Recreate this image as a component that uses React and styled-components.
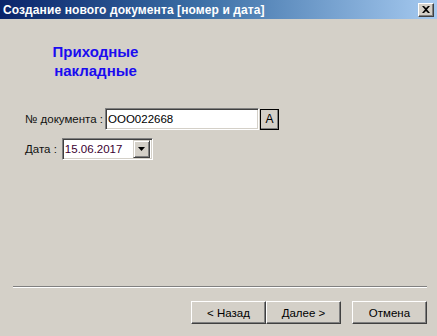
import React from "react";
import styled, { createGlobalStyle } from "styled-components";

const Global = createGlobalStyle`
  html, body {
    margin: 0;
    padding: 0;
    background: #d4d0c8;
  }
  * { box-sizing: border-box; }
`;

const Window = styled.div`
  width: 437px;
  height: 336px;
  display: flex;
  flex-direction: column;
  background: #d4d0c8;
  font-family: "Liberation Sans", Arial, sans-serif;
  font-size: 11px;
  color: #000;
`;

const TitleBar = styled.div`
  height: 19px;
  display: flex;
  align-items: center;
  justify-content: space-between;
  padding: 0 3px 0 3px;
  background: linear-gradient(to right, #0a246a 0%, #3a6ea5 45%, #a6caf0 100%);
`;

const Title = styled.span`
  color: #fff;
  font-weight: bold;
  font-size: 12px;
  letter-spacing: 0.1px;
`;

const CloseBtn = styled.div`
  width: 16px;
  height: 14px;
  background: #d4d0c8;
  border: 1px solid;
  border-color: #fff #404040 #404040 #fff;
  box-shadow: inset -1px -1px 0 #808080;
  display: flex;
  align-items: center;
  justify-content: center;
`;

const Body = styled.div`
  flex: 1;
  display: flex;
  flex-direction: column;
  padding: 23px 0 0 25px;
`;

const Heading = styled.div`
  width: 141px;
  text-align: center;
  color: #1a0cf0;
  font-weight: bold;
  font-size: 15px;
  line-height: 19px;
`;

const Row = styled.div`
  display: flex;
  align-items: center;
  margin-top: ${(p) => p.$mt}px;
`;

const Label = styled.span`
  font-size: 11.5px;
  margin-right: ${(p) => p.$gap}px;
  color: #101010;
`;

const Field = styled.div`
  width: ${(p) => p.$w}px;
  height: 22px;
  background: #fff;
  border: 1px solid;
  border-color: #808080 #fff #fff #808080;
  box-shadow: inset 1px 1px 0 #404040, inset -1px -1px 0 #d4d0c8;
  display: flex;
  align-items: center;
  padding: 0 2px;
  font-size: 11.5px;
  color: ${(p) => p.$color || "#000"};
`;

const SmallBtn = styled.div`
  width: 19px;
  height: 21px;
  margin-left: 1px;
  background: #d4d0c8;
  border: 1px solid;
  border-color: #fff #000 #000 #fff;
  box-shadow: inset -1px -1px 0 #808080;
  display: flex;
  align-items: center;
  justify-content: center;
  font-size: 12px;
  outline: 1px solid #000;
  outline-offset: -1px;
`;

const DropBtn = styled.div`
  margin-left: auto;
  width: 17px;
  height: 18px;
  background: #d4d0c8;
  border: 1px solid;
  border-color: #d4d0c8 #404040 #404040 #d4d0c8;
  box-shadow: inset 1px 1px 0 #fff, inset -1px -1px 0 #808080;
  display: flex;
  align-items: center;
  justify-content: center;
`;

const Footer = styled.div`
  padding: 0 10px 12px 13px;
  display: flex;
  flex-direction: column;
`;

const Separator = styled.div`
  height: 2px;
  border-top: 1px solid #808080;
  border-bottom: 1px solid #fff;
`;

const Buttons = styled.div`
  display: flex;
  justify-content: flex-end;
  margin-top: 13px;
`;

const Button = styled.div`
  width: 75px;
  height: 23px;
  margin-left: ${(p) => p.$gap || 0}px;
  background: #d4d0c8;
  border: 1px solid;
  border-color: #fff #404040 #404040 #fff;
  box-shadow: inset -1px -1px 0 #808080;
  display: flex;
  align-items: center;
  justify-content: center;
  font-size: 11.5px;
  color: #000;
`;

export default function App() {
  return (
    <Window>
      <Global />
      <TitleBar>
        <Title>Создание нового документа [номер и дата]</Title>
        <CloseBtn>
          <svg width="8" height="7" viewBox="0 0 8 7">
            <path d="M0 0 L2 0 L4 2 L6 0 L8 0 L5 3.5 L8 7 L6 7 L4 5 L2 7 L0 7 L3 3.5 Z" fill="#000" />
          </svg>
        </CloseBtn>
      </TitleBar>
      <Body>
        <Heading>
          Приходные
          <br />
          накладные
        </Heading>
        <Row $mt={28}>
          <Label $gap={2}>№ документа :</Label>
          <Field $w={154}>ООО022668</Field>
          <SmallBtn>A</SmallBtn>
        </Row>
        <Row $mt={8}>
          <Label $gap={5}>Дата :</Label>
          <Field $w={91} $color="#3a0030">
            15.06.2017
            <DropBtn>
              <svg width="7" height="4" viewBox="0 0 7 4">
                <path d="M0 0 H7 L3.5 4 Z" fill="#000" />
              </svg>
            </DropBtn>
          </Field>
        </Row>
      </Body>
      <Footer>
        <Separator />
        <Buttons>
          <Button>&lt; Назад</Button>
          <Button>Далее &gt;</Button>
          <Button $gap={11}>Отмена</Button>
        </Buttons>
      </Footer>
    </Window>
  );
}
